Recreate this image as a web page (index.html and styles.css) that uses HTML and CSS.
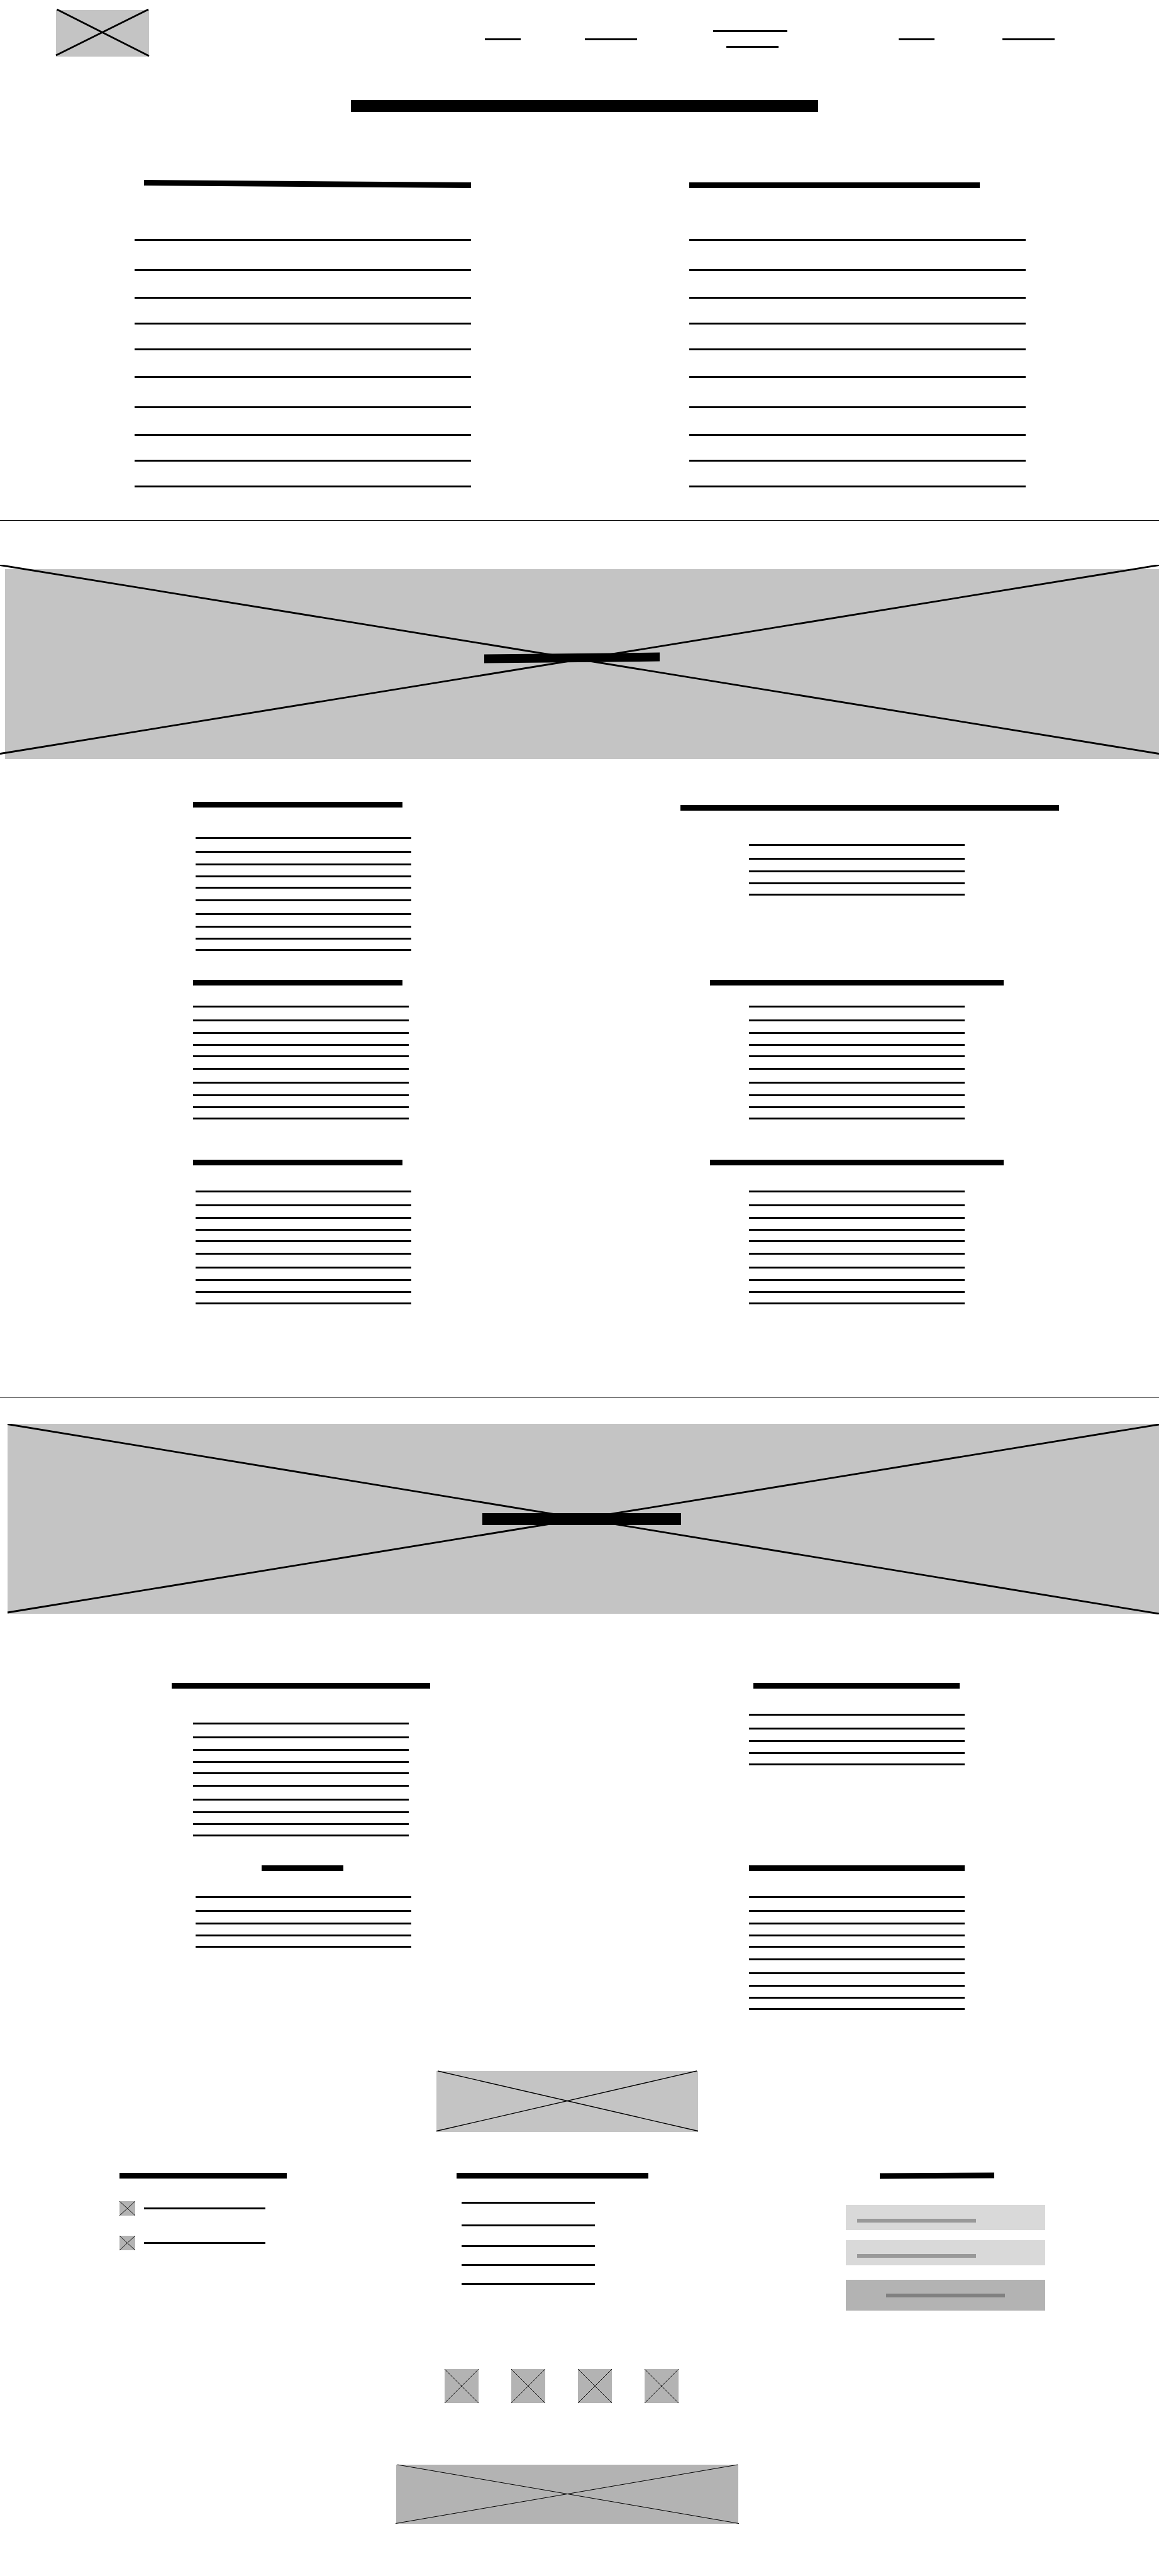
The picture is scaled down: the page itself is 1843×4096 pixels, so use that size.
FILE: index.html
```html
<!DOCTYPE html>
<html lang="en">
<head>
<meta charset="utf-8">
<meta name="viewport" content="width=device-width, initial-scale=1">
<title>Wireframe</title>
<link rel="stylesheet" href="styles.css">
</head>
<body>
<header class="header">
  <a href="#" class="logo" aria-label="Home">
    <svg class="box" width="148" height="74" viewBox="0 0 148 74"><rect width="148" height="74" fill="#c4c4c4"/><path d="M1.5-1 148 73M0 72 147-1" stroke="#000" stroke-width="2.8"/></svg>
  </a>
  <nav class="nav" aria-label="Main">
    <a href="#" class="nav-link" aria-label="Item 1"><span class="line w-57"></span></a>
    <a href="#" class="nav-link" aria-label="Item 2"><span class="line w-83"></span></a>
    <a href="#" class="nav-link" aria-label="Item 3"><span class="line w-118"></span><span class="line w-83 nav-second"></span></a>
    <a href="#" class="nav-link" aria-label="Item 4"><span class="line w-57"></span></a>
    <a href="#" class="nav-link" aria-label="Item 5"><span class="line w-83"></span></a>
  </nav>
</header>

<main>
  <h1 class="title"></h1>

  <section class="intro">
    <article class="intro-text">
      <h2 class="heading w-520 slant-down push-right gap-83"></h2>
      <div class="lines lines-wide"><i></i><i></i><i></i><i></i><i></i><i></i><i></i><i></i><i></i><i></i></div>
    </article>
    <article class="intro-text">
      <h2 class="heading w-462 gap-81"></h2>
      <div class="lines lines-wide"><i></i><i></i><i></i><i></i><i></i><i></i><i></i><i></i><i></i><i></i></div>
    </article>
  </section>

  <hr class="rule">

  <section class="banner banner-first">
    <svg class="banner-art" height="309" viewBox="0 0 1843 309" preserveAspectRatio="none"><rect x="8" y="7" width="1835" height="302" fill="#c4c4c4"/><path d="M0 .5 1843 300.5M0 300.5 1843 .5" stroke="#000" stroke-width="2.8" vector-effect="non-scaling-stroke"/></svg>
    <h2 class="banner-title"></h2>
  </section>

  <section class="pair pair-first">
    <article class="block block-start">
      <h3 class="heading w-333 gap-47"></h3>
      <div class="lines inset"><i></i><i></i><i></i><i></i><i></i><i></i><i></i><i></i><i></i><i></i></div>
    </article>
    <article class="block lowered">
      <h3 class="heading w-602 gap-53"></h3>
      <div class="lines"><i></i><i></i><i></i><i></i><i></i></div>
    </article>
  </section>
  <section class="pair pair-near">
    <article class="block block-start">
      <h3 class="heading w-333 gap-32"></h3>
      <div class="lines"><i></i><i></i><i></i><i></i><i></i><i></i><i></i><i></i><i></i><i></i></div>
    </article>
    <article class="block">
      <h3 class="heading w-467 gap-32"></h3>
      <div class="lines"><i></i><i></i><i></i><i></i><i></i><i></i><i></i><i></i><i></i><i></i></div>
    </article>
  </section>
  <section class="pair pair-far">
    <article class="block block-start">
      <h3 class="heading w-333 gap-40"></h3>
      <div class="lines inset"><i></i><i></i><i></i><i></i><i></i><i></i><i></i><i></i><i></i><i></i></div>
    </article>
    <article class="block">
      <h3 class="heading w-467 gap-40"></h3>
      <div class="lines"><i></i><i></i><i></i><i></i><i></i><i></i><i></i><i></i><i></i><i></i></div>
    </article>
  </section>

  <hr class="rule rule-soft">

  <section class="banner banner-second">
    <svg class="banner-art" height="303" viewBox="0 0 1843 303" preserveAspectRatio="none"><rect x="12" width="1831" height="302" fill="#c4c4c4"/><path d="M12 .5 1843 302M12 300 1843 1" stroke="#000" stroke-width="2.8" vector-effect="non-scaling-stroke"/></svg>
    <h2 class="banner-title"></h2>
  </section>

  <section class="pair pair-after-banner">
    <article class="block">
      <h3 class="heading w-411 gap-54"></h3>
      <div class="lines"><i></i><i></i><i></i><i></i><i></i><i></i><i></i><i></i><i></i><i></i></div>
    </article>
    <article class="block">
      <h3 class="heading w-328 gap-40"></h3>
      <div class="lines"><i></i><i></i><i></i><i></i><i></i></div>
    </article>
  </section>
  <section class="pair pair-near">
    <article class="block">
      <h3 class="heading w-130 gap-40 inset-half"></h3>
      <div class="lines inset"><i></i><i></i><i></i><i></i><i></i></div>
    </article>
    <article class="block">
      <h3 class="heading w-343 gap-40"></h3>
      <div class="lines"><i></i><i></i><i></i><i></i><i></i><i></i><i></i><i></i><i></i><i></i></div>
    </article>
  </section>
</main>

<footer class="footer">
  <div class="footer-image">
    <svg class="box" width="416" height="97" viewBox="0 0 416 97"><rect width="416" height="97" fill="#c4c4c4"/><path d="M2 0 416 95.500M0 95.500 414 0" stroke="#000" stroke-width="1.300"/></svg>
  </div>

  <div class="footer-columns">
    <section>
      <h3 class="heading w-266 gap-36"></h3>
      <ul class="contacts">
        <li><svg class="box" width="25" height="23" viewBox="0 0 25 23"><rect width="25" height="23" fill="#b3b3b3"/><path d="M0 0 25 23M0 23 25 0" stroke="#000" stroke-width=".9"/></svg><span class="line w-193"></span></li>
        <li><svg class="box" width="25" height="23" viewBox="0 0 25 23"><rect width="25" height="23" fill="#b3b3b3"/><path d="M0 0 25 23M0 23 25 0" stroke="#000" stroke-width=".9"/></svg><span class="line w-193"></span></li>
      </ul>
    </section>
    <section>
      <h3 class="heading w-305 gap-37"></h3>
      <div class="lines lines-links"><i></i><i></i><i></i><i></i><i></i></div>
    </section>
    <form class="form">
      <h3 class="heading w-182 slant-up"></h3>
      <input class="field" type="text" aria-label="Name">
      <input class="field" type="email" aria-label="Email">
      <button class="submit" type="button" aria-label="Send"><span class="submit-text"></span></button>
    </form>
  </div>

  <div class="social">
    <a href="#" aria-label="Social 1"><svg class="box" width="54" height="54" viewBox="0 0 54 54"><rect width="54" height="54" fill="#b3b3b3"/><path d="M0 0 54 54M0 54 54 0" stroke="#000" stroke-width=".9"/></svg></a>
    <a href="#" aria-label="Social 2"><svg class="box" width="54" height="54" viewBox="0 0 54 54"><rect width="54" height="54" fill="#b3b3b3"/><path d="M0 0 54 54M0 54 54 0" stroke="#000" stroke-width=".9"/></svg></a>
    <a href="#" aria-label="Social 3"><svg class="box" width="54" height="54" viewBox="0 0 54 54"><rect width="54" height="54" fill="#b3b3b3"/><path d="M0 0 54 54M0 54 54 0" stroke="#000" stroke-width=".9"/></svg></a>
    <a href="#" aria-label="Social 4"><svg class="box" width="54" height="54" viewBox="0 0 54 54"><rect width="54" height="54" fill="#b3b3b3"/><path d="M0 0 54 54M0 54 54 0" stroke="#000" stroke-width=".9"/></svg></a>
  </div>

  <div class="footer-image">
    <svg class="box" width="544" height="94" viewBox="0 0 544 94"><rect width="544" height="94" fill="#b3b3b3"/><path d="M2 0 545 93.500M-1 93.500 543 0" stroke="#000" stroke-width="1"/></svg>
  </div>
</footer>
</body>
</html>
```
FILE: styles.css
```css
* { box-sizing: border-box; }

body {
  margin: 0;
  background: #fff;
  color: #000;
  font-family: "Liberation Sans", sans-serif;
}

h1, h2, h3, ul { margin: 0; padding: 0; }
ul { list-style: none; }

.box { display: block; overflow: visible; }

/* Placeholder strokes */
.line { display: block; height: 3px; background: #000; }
.heading { flex: none; height: 9px; background: #000; }

.w-57 { width: 57px; }
.w-83 { width: 83px; }
.w-118 { width: 118px; }
.w-130 { width: 130px; }
.w-182 { width: 182px; }
.w-193 { width: 193px; }
.w-266 { width: 266px; }
.w-305 { width: 305px; }
.w-328 { width: 328px; }
.w-333 { width: 333px; }
.w-343 { width: 343px; }
.w-411 { width: 411px; }
.w-462 { width: 462px; }
.w-467 { width: 467px; }
.w-520 { width: 520px; }
.w-602 { width: 602px; margin-left: 42px; }

.gap-32 { margin-bottom: 32px; }
.gap-36 { margin-bottom: 36px; }
.gap-37 { margin-bottom: 37px; }
.gap-40 { margin-bottom: 40px; }
.gap-47 { margin-bottom: 47px; }
.gap-53 { margin-bottom: 53px; }
.gap-54 { margin-bottom: 54px; }
.gap-81 { margin-bottom: 81px; }
.gap-83 { margin-bottom: 83px; }

.slant-down { transform: skewY(0.45deg); }
.slant-up { transform: skewY(-0.25deg); }
.push-right { align-self: flex-end; }

/* Paragraph of strokes, spaced in a rhythm of five */
.lines { width: 343px; }
.lines i { display: block; height: 3px; background: #000; }
.lines i:nth-child(5n+2) { margin-top: 19px; }
.lines i:nth-child(5n+3) { margin-top: 17px; }
.lines i:nth-child(5n+4) { margin-top: 16px; }
.lines i:nth-child(5n+5) { margin-top: 15px; }
.lines i:nth-child(5n+6) { margin-top: 17px; }

.lines-wide { width: 100%; }
.lines-wide i:nth-child(5n+2) { margin-top: 45px; }
.lines-wide i:nth-child(5n+3) { margin-top: 41px; }
.lines-wide i:nth-child(5n+4) { margin-top: 38px; }
.lines-wide i:nth-child(5n+5) { margin-top: 38px; }
.lines-wide i:nth-child(5n+6) { margin-top: 41px; }

.lines-links { width: 212px; margin-left: 8px; }
.lines-links i:nth-child(5n+2) { margin-top: 33px; }
.lines-links i:nth-child(5n+3) { margin-top: 30px; }
.lines-links i:nth-child(5n+4) { margin-top: 27px; }
.lines-links i:nth-child(5n+5) { margin-top: 27px; }

/* Header */
.header {
  display: flex;
  justify-content: space-between;
  align-items: flex-start;
  padding: 16px 9% 0 89px;
}
.nav {
  display: grid;
  grid-template-columns: 159fr 204fr 295fr 165fr 83fr;
  align-items: center;
  width: 906px;
  margin-top: 32px;
}
.nav-link { display: flex; flex-direction: column; gap: 22px; }
.nav-second { margin-left: 21px; }

.title {
  width: 743px;
  height: 19px;
  margin: 69px 0 0 30.3%;
  background: #000;
}

/* Intro */
.intro {
  display: grid;
  grid-template-columns: 1fr 1fr;
  align-items: end;
  justify-items: center;
  padding: 110px 39px 52px 40px;
}
.intro-text { display: flex; flex-direction: column; width: 535px; }

.rule { height: 1px; margin: 0; border: 0; background: #000; }
.rule-soft { height: 2px; margin-top: 147px; background: #808080; }

/* Crossed image banners */
.banner { display: grid; overflow: hidden; }
.banner > * { grid-area: 1 / 1; }
.banner-art { display: block; width: 100%; }
.banner-title { background: #000; }
.banner-first { margin-top: 70px; }
.banner-first .banner-title {
  width: 279px;
  height: 14px;
  margin: 141px 0 0 41.8%;
  transform: skewY(-0.57deg);
}
.banner-second { margin-top: 41px; }
.banner-second .banner-title {
  width: 316px;
  height: 19px;
  margin: 142px 0 0 41.6%;
}

/* Two-column text */
.pair {
  display: grid;
  grid-template-columns: 1fr 1fr;
  justify-items: center;
  align-items: start;
  padding: 0 39px 0 36px;
}
.pair-first { margin-top: 68px; }
.pair-near { margin-top: 46px; }
.pair-far { margin-top: 64px; }
.pair-after-banner { margin-top: 109px; }
.block {
  display: flex;
  flex-direction: column;
  align-items: center;
  width: 343px;
}
.block-start { align-items: flex-start; }
.lowered { margin-top: 5px; }
.inset { flex: none; margin-left: 4px; }
.block:not(.block-start) > .inset { margin-left: 8px; }
.inset-half { margin-left: 6px; }

/* Footer */
.footer { padding: 97px 0 83px; }
.footer-image { display: flex; justify-content: center; padding-right: 40px; }
.footer-columns {
  display: grid;
  grid-template-columns: 536fr 619fr 317fr;
  margin: 65px 0 93px;
  padding: 0 181px 0 190px;
}
.contacts { display: grid; gap: 32px; }
.contacts li { display: flex; align-items: center; gap: 14px; }

.form { display: flex; flex-direction: column; }
.form .heading { margin: 0 0 42px 54px; }
.field {
  width: 100%;
  height: 40px;
  margin: 0 0 16px;
  padding: 0 18px;
  border: 0;
  background: linear-gradient(#999, #999) 18px 22px / 189px 6px no-repeat #d9d9d9;
  font: 16px "Liberation Sans", sans-serif;
}
.submit {
  display: flex;
  justify-content: center;
  align-items: center;
  width: 100%;
  height: 49px;
  margin-top: 7px;
  padding: 0;
  border: 0;
  background: #b3b3b3;
}
.submit-text { width: 189px; height: 6px; background: #808080; }

.social {
  display: flex;
  justify-content: center;
  gap: 52px;
  margin-bottom: 98px;
  padding-right: 57px;
}
```
